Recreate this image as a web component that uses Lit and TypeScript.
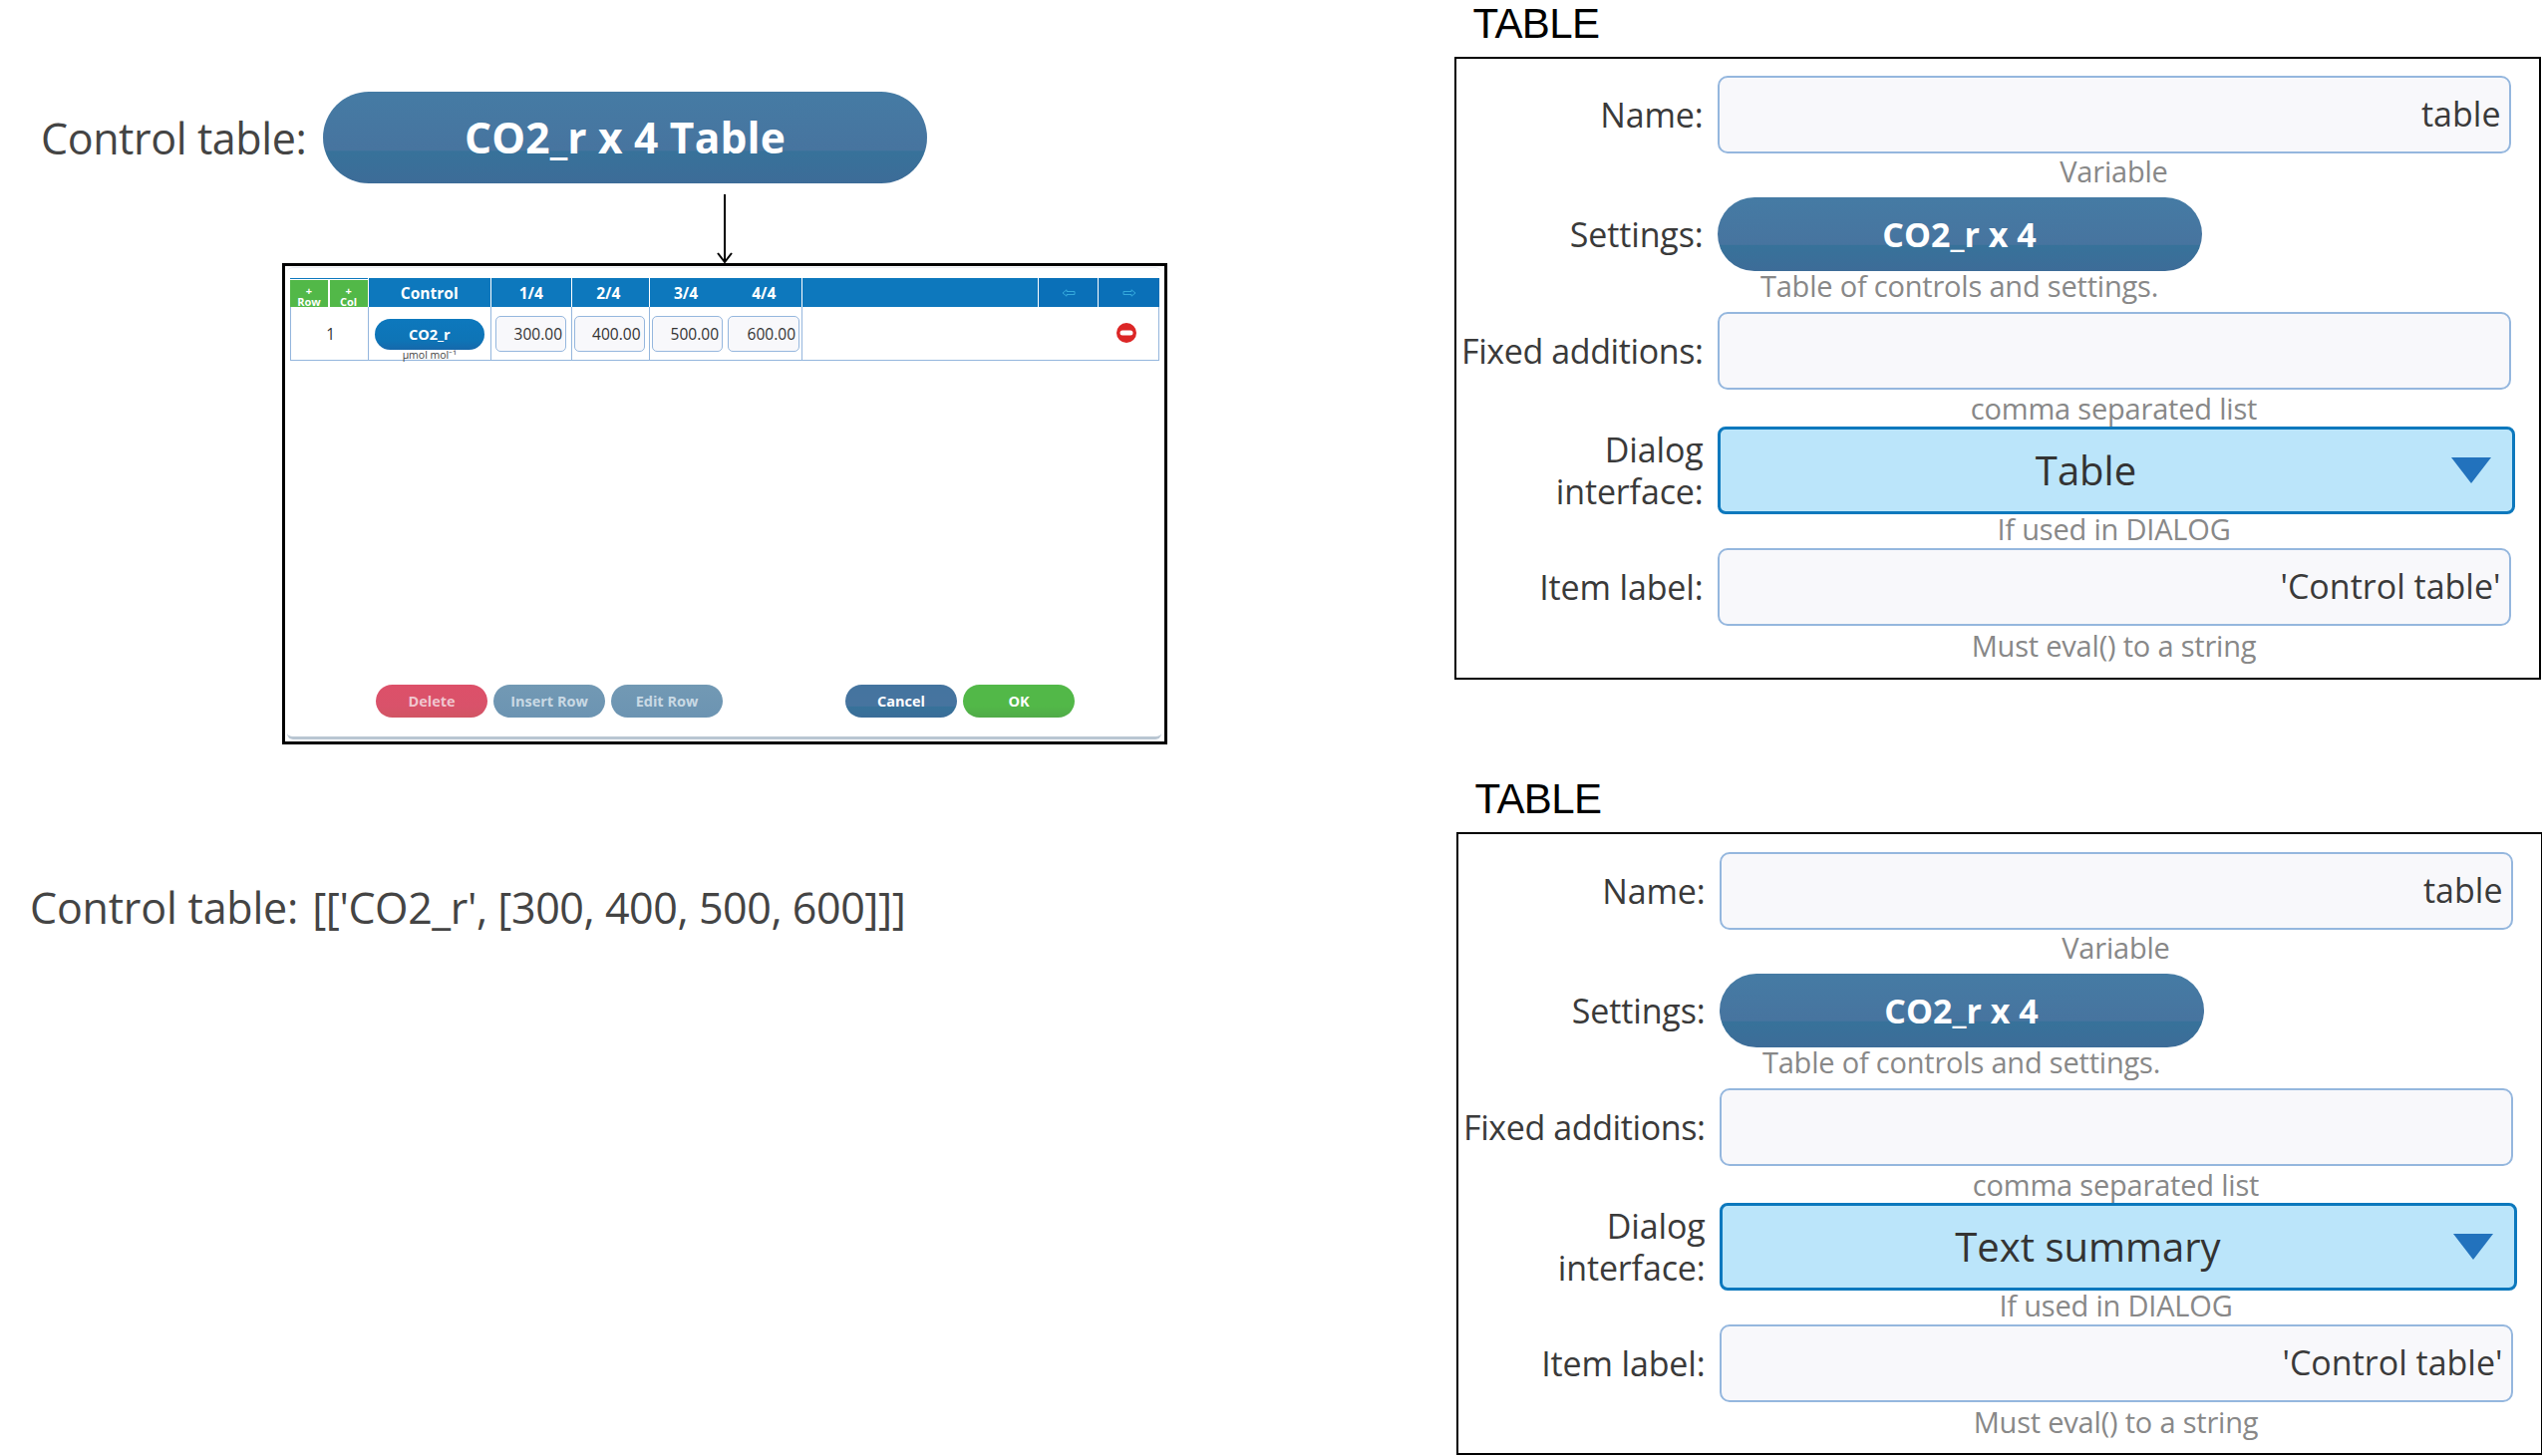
import { LitElement, html, css } from "lit";
import { customElement, property } from "lit/decorators.js";

@customElement("form-panel")
class FormPanel extends LitElement {
  @property() value = "Table";
  static styles = css`
    :host { display: block; width: 1090px; color: #333; font-family: "Open Sans", sans-serif; }
    .title { font-family: "Liberation Sans", sans-serif; font-size: 42px; line-height: 48px; height: 57px; margin-left: 19px; color: #000; letter-spacing: -0.6px; }
    .box { box-sizing: border-box; width: 100%; height: var(--box-h, 625px); border: 2.5px solid #000; padding-top: var(--box-pad, 16.5px); }
    .row { display: flex; align-items: center; }
    .label { box-sizing: border-box; width: 248px; margin-right: 14px; text-align: right; font-size: 34px; line-height: 42px; font-weight: 500; color: #3a3a3a; flex: none; letter-spacing: -0.15px; white-space: nowrap; }
    .label.tight { letter-spacing: -0.4px; }
    .field { box-sizing: border-box; width: 796px; height: 78px; border: 2px solid #95b7de; border-radius: 10px; background: #f8f8fb; text-align: right; padding-right: 8px; font-size: 34px; font-weight: 500; line-height: 72px; color: #3a3a3a; }
    .pill { box-sizing: border-box; width: 486px; height: 74px; border-radius: 37px; background: linear-gradient(#457ba4 0%, #47749f 64%, #37729a 65%, #3d6c98 100%); color: #fff; font-weight: 700; font-size: 34px; line-height: 74px; text-align: center; }
    .select { box-sizing: border-box; width: 800px; height: 88px; border: 3px solid #0c78bd; border-radius: 8px; background: #bbe5fa; display: flex; align-items: center; font-size: 40px; font-weight: 500; color: #333; }
    .select span { width: 734px; text-align: center; }
    .select svg { margin-left: -1px; }
    .hint { margin-left: 262px; width: 796px; text-align: center; font-size: 29px; color: #888; letter-spacing: -0.2px; }
    .hint.short { width: 486px; }
    .h36 { height: 44px; line-height: 36px; }
    .h41 { height: 41px; line-height: 30px; }
    .h37 { height: 37px; line-height: 38px; }
    .h34 { height: 34px; line-height: 30px; }
    .h49 { line-height: 40px; }
  `;
  render() {
    return html`
      <div class="title">TABLE</div>
      <div class="box">
        <div class="row"><div class="label">Name:</div><div class="field">table</div></div>
        <div class="hint h36">Variable</div>
        <div class="row"><div class="label">Settings:</div><div class="pill">CO2_r x 4</div></div>
        <div class="hint short h41">Table of controls and settings.</div>
        <div class="row"><div class="label tight">Fixed additions:</div><div class="field"></div></div>
        <div class="hint h37">comma separated list</div>
        <div class="row"><div class="label">Dialog<br />interface:</div>
          <div class="select"><span>${this.value}</span>
            <svg width="40" height="26" viewBox="0 0 40 26"><path d="M0 0H40L20 26Z" fill="#2272bd" /></svg>
          </div>
        </div>
        <div class="hint h34">If used in DIALOG</div>
        <div class="row"><div class="label">Item label:</div><div class="field">'Control table'</div></div>
        <div class="hint h49">Must eval() to a string</div>
      </div>
    `;
  }
}

@customElement("app-root")
class AppRoot extends LitElement {
  static styles = css`
    :host { display: block; width: 2550px; height: 1461px; background: #fff; overflow: hidden; font-family: "Open Sans", sans-serif; }
    .page { display: flex; height: 1461px; }
    .left { width: 1458.5px; flex: none; }
    .panel2 { margin-top: 96px; margin-left: 2px; --box-h: 625px; --box-pad: 17.5px; }
    .panel2::part(x) { display: none; }
    .top { display: flex; align-items: center; margin-top: 92px; height: 92px; }
    .toplabel { box-sizing: border-box; width: 324px; padding-left: 41px; font-size: 43px; font-weight: 500; color: #444; letter-spacing: -0.4px; white-space: nowrap; }
    .bigpill { width: 606px; height: 92px; border-radius: 46px; background: linear-gradient(#457ba4 0%, #47749f 64%, #37729a 65%, #3d6c98 100%); color: #fff; font-weight: 700; font-size: 42.5px; line-height: 92px; text-align: center; letter-spacing: 0.2px; }
    .arrow { display: block; margin: 11px 0 0 719px; }
    .dialog { box-sizing: border-box; width: 888px; height: 483px; margin-left: 283px; border: 3px solid #000; padding: 1px 3px 2px 2px; }
    .inner { box-sizing: border-box; height: 100%; border-top: 1px solid #e9ecf3; border-bottom: 3px solid #b9c6d2; border-radius: 6px; padding: 10px 0 0 3px; display: flex; flex-direction: column; }
    .table { display: grid; width: 872px; grid-template-columns: 77.5px 123.5px 80.5px 78.5px 153px 237px 60px 62px; grid-template-rows: 29px 54px; }
    .th { background: #0d78bd; color: #fff; font-weight: 700; font-size: 15.5px; display: flex; align-items: center; justify-content: center; border-left: 1px solid #fff; box-sizing: border-box; }
    .th.first { border-left: 0; background: #fff; border-top: 1px solid #0d78bd; gap: 2px; align-items: stretch; padding-top: 1px; }
    .th.shift { padding-right: 4px; }
    .th.split { justify-content: flex-start; padding: 0 0 0 24px; gap: 54px; }
    .th.nav { background: #0a70b8; }
    .green { flex: 1; background: #52b848; font-size: 11px; line-height: 11px; text-align: center; padding-top: 5px; font-weight: 700; }
    .td { box-sizing: border-box; border-bottom: 1px solid #94b6dd; border-left: 1px solid #94b6dd; display: flex; align-items: center; font-size: 15.5px; color: #333; }
    .td.one { justify-content: center; padding-left: 3px; }
    .td.last { border-right: 1px solid #94b6dd; grid-column: span 2; border-left: 0; justify-content: flex-end; padding-right: 22px; padding-bottom: 1px; }
    .td.wide { border-left: 1px solid #94b6dd; }
    .td.ctl { flex-direction: column; align-items: center; padding-top: 12px; }
    .mini { width: 110px; height: 31px; border-radius: 16px; background: linear-gradient(#0d78bd, #0e74b6 70%, #1668ab); color: #fff; font-weight: 700; font-size: 14.5px; line-height: 31px; text-align: center; flex: none; }
    .unit { font-size: 10.5px; line-height: 10px; color: #444; }
    .td.vals { gap: 5px; padding-left: 2px; }
    .td.vals.p4 { padding-left: 4px; }
    .inp { box-sizing: border-box; width: 71px; height: 36px; border: 1px solid #95b7de; border-radius: 5px; background: #f8f8fb; text-align: right; padding-right: 3px; line-height: 34px; color: #333; flex: none; }
    .inp.w { width: 72px; }
    .spacer { flex: 1; }
    .btns { display: flex; padding-left: 86px; margin-bottom: 19px; }
    .btn { box-sizing: border-box; width: 112px; height: 33px; border-radius: 17px; font-weight: 700; font-size: 14.5px; line-height: 33px; text-align: center; color: #fff; margin-right: 6px; flex: none; }
    .del { background: linear-gradient(#dd5069 0%, #d9526a 65%, #d15564 100%); color: #f0c6cf; }
    .ins { background: linear-gradient(#7299b4, #6c94b2); color: #c9d9e4; }
    .can { background: linear-gradient(#44749f 0%, #47749f 65%, #37729a 66%, #3a6d98 100%); margin-left: 117px; }
    .ok { background: linear-gradient(#52b848 0%, #52b848 65%, #50ab48 100%); }
    .result { margin: 138px 0 0 30px; font-size: 43px; font-weight: 500; color: #444; white-space: nowrap; letter-spacing: -0.2px; line-height: 52px; }
    .result span { margin-left: 14px; letter-spacing: -0.42px; }
  `;
  render() {
    return html`<div class="page">
      <div class="left">
        <div class="top"><div class="toplabel">Control table:</div><div class="bigpill">CO2_r x 4 Table</div></div>
        <svg class="arrow" width="16" height="69" viewBox="0 0 16 69"><path d="M8 0V68M1 59L8 68L15 59" fill="none" stroke="#000" stroke-width="2" /></svg>
        <div class="dialog"><div class="inner">
          <div class="table">
            <div class="th first"><div class="green">+<br />Row</div><div class="green">+<br />Col</div></div>
            <div class="th">Control</div>
            <div class="th">1/4</div>
            <div class="th shift">2/4</div>
            <div class="th split"><span>3/4</span><span>4/4</span></div>
            <div class="th"></div>
            <div class="th nav"><svg width="14" height="8" viewBox="0 0 14 8"><path d="M1 4L5 .8V2.5H13V5.5H5V7.2Z" fill="none" stroke="#35a9dc" /></svg></div>
            <div class="th nav"><svg width="14" height="8" viewBox="0 0 14 8"><path d="M13 4L9 .8V2.5H1V5.5H9V7.2Z" fill="none" stroke="#35a9dc" /></svg></div>
            <div class="td one">1</div>
            <div class="td ctl"><div class="mini">CO2_r</div><div class="unit">μmol mol⁻¹</div></div>
            <div class="td vals p4"><div class="inp">300.00</div></div>
            <div class="td vals"><div class="inp">400.00</div></div>
            <div class="td vals"><div class="inp">500.00</div><div class="inp w">600.00</div></div>
            <div class="td wide"></div>
            <div class="td last"><svg width="20" height="20" viewBox="0 0 20 20"><circle cx="10" cy="10" r="10" fill="#dc2626" /><rect x="3.5" y="7.5" width="13" height="5" rx="2.5" fill="#fff" /></svg></div>
          </div>
          <div class="spacer"></div>
          <div class="btns">
            <div class="btn del">Delete</div><div class="btn ins">Insert Row</div><div class="btn ins">Edit Row</div>
            <div class="btn can">Cancel</div><div class="btn ok">OK</div>
          </div>
        </div></div>
        <div class="result">Control table:<span>[['CO2_r', [300, 400, 500, 600]]]</span></div>
      </div>
      <div class="right">
        <form-panel value="Table"></form-panel>
        <form-panel class="panel2" value="Text summary"></form-panel>
      </div>
    </div>`;
  }
}
